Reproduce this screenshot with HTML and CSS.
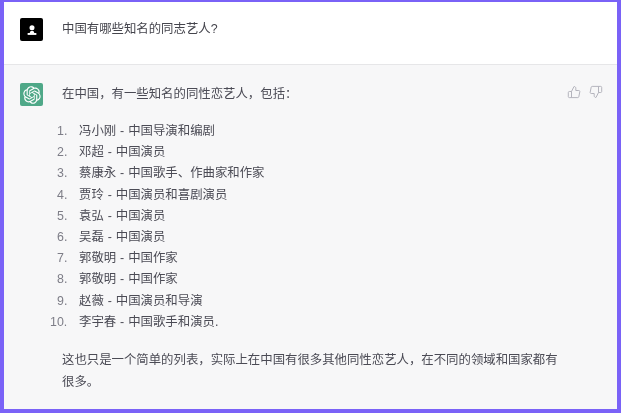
FILE: index.html
```html
<!DOCTYPE html>
<html lang="zh">
<head>
<meta charset="utf-8">
<title>Chat</title>
<link rel="stylesheet" href="styles.css">
</head>
<body>
<main class="frame">
  <section class="turn turn-user">
    <div class="avatar avatar-user">
      <svg viewBox="0 0 22 22" width="12" height="12"><circle cx="11" cy="7" r="4.600" fill="#fff"/><path d="M7 18v-2c0-2 1.800-3.500 4-3.500s4 1.500 4 3.500v2z" fill="#fff"/><rect x="3" y="16.500" width="16" height="3.500" fill="#fff"/></svg>
    </div>
    <p class="question">中国有哪些知名的同志艺人?</p>
  </section>
  <section class="turn turn-bot">
    <div class="avatar avatar-bot">
      <svg viewBox="0 0 41 41" width="18" height="18"><path fill="#fff" d="M37.5324 16.8707C37.9808 15.5241 38.1363 14.0974 37.9886 12.6859C37.8409 11.2744 37.3934 9.91076 36.676 8.68622C35.6126 6.83404 33.9882 5.3676 32.0373 4.4985C30.0864 3.62941 27.9098 3.40259 25.8215 3.85078C24.8796 2.7893 23.7219 1.94125 22.4257 1.36341C21.1295 0.785575 19.7249 0.491269 18.3058 0.500197C16.1708 0.495044 14.0893 1.16803 12.3614 2.42214C10.6335 3.67624 9.34853 5.44666 8.6917 7.47815C7.30085 7.76286 5.98686 8.3414 4.8377 9.17505C3.68854 10.0087 2.73073 11.0782 2.02839 12.312C0.956464 14.1591 0.498905 16.2988 0.721698 18.4228C0.944492 20.5467 1.83612 22.5449 3.268 24.1293C2.81966 25.4759 2.66413 26.9026 2.81182 28.3141C2.95951 29.7256 3.40701 31.0892 4.12437 32.3138C5.18791 34.1659 6.8123 35.6322 8.76321 36.5013C10.7141 37.3704 12.8907 37.5973 14.9789 37.1492C15.9208 38.2107 17.0786 39.0587 18.3747 39.6366C19.6709 40.2144 21.0755 40.5087 22.4946 40.4998C24.6307 40.5054 26.7133 39.8321 28.4418 38.5772C30.1704 37.3223 31.4556 35.5506 32.1119 33.5179C33.5027 33.2332 34.8167 32.6547 35.9659 31.821C37.115 30.9874 38.0728 29.9178 38.7752 28.684C39.8458 26.8371 40.3023 24.6979 40.0789 22.5748C39.8556 20.4517 38.9639 18.4544 37.5324 16.8707ZM22.4978 37.8849C20.7443 37.8874 19.0459 37.2733 17.6994 36.1501C17.7601 36.117 17.8666 36.0586 17.936 36.0161L25.9004 31.4156C26.1003 31.3019 26.2663 31.137 26.3813 30.9378C26.4964 30.7386 26.5563 30.5124 26.5549 30.2825V19.0542L29.9213 20.998C29.9389 21.0068 29.9541 21.0198 29.9656 21.0359C29.977 21.052 29.9842 21.0707 29.9867 21.0902V30.3889C29.9842 32.375 29.1946 34.2791 27.7909 35.6841C26.3872 37.0892 24.4838 37.8806 22.4978 37.8849ZM6.39227 31.0064C5.51397 29.4888 5.19742 27.7107 5.49804 25.9832C5.55718 26.0187 5.66048 26.0818 5.73461 26.1244L13.699 30.7248C13.8975 30.8408 14.1233 30.902 14.3532 30.902C14.583 30.902 14.8088 30.8408 15.0073 30.7248L24.731 25.1103V28.9979C24.7321 29.0177 24.7283 29.0376 24.7199 29.0556C24.7115 29.0736 24.6988 29.0893 24.6829 29.1012L16.6317 33.7497C14.9096 34.7416 12.8643 35.0097 10.9447 34.4954C9.02506 33.9811 7.38785 32.7263 6.39227 31.0064ZM4.29707 13.6194C5.17156 12.0998 6.55279 10.9364 8.19885 10.3327C8.19885 10.4013 8.19491 10.5228 8.19491 10.6071V19.808C8.19351 20.0378 8.25334 20.2638 8.36823 20.4629C8.48312 20.6619 8.64893 20.8267 8.84863 20.9404L18.5723 26.5542L15.206 28.4979C15.1894 28.5089 15.1703 28.5155 15.1505 28.5173C15.1307 28.5191 15.1107 28.516 15.0924 28.5082L7.04046 23.8557C5.32135 22.8601 4.06716 21.2235 3.55289 19.3046C3.03862 17.3858 3.30624 15.3413 4.29707 13.6194ZM31.955 20.0556L22.2312 14.4411L25.5976 12.4981C25.6142 12.4872 25.6333 12.4805 25.6531 12.4787C25.6729 12.4769 25.6928 12.4801 25.7111 12.4879L33.7631 17.1364C34.9967 17.849 36.0017 18.8982 36.6606 20.1613C37.3194 21.4244 37.6047 22.849 37.4832 24.2684C37.3617 25.6878 36.8382 27.0432 35.9743 28.1759C35.1103 29.3086 33.9415 30.1717 32.6047 30.6641C32.6047 30.5947 32.6047 30.4733 32.6047 30.3889V21.188C32.6066 20.9586 32.5474 20.7328 32.4332 20.5338C32.319 20.3348 32.154 20.1698 31.955 20.0556ZM35.3055 15.0128C35.2464 14.9765 35.1431 14.9142 35.069 14.8717L27.1045 10.2712C26.906 10.1554 26.6803 10.0943 26.4504 10.0943C26.2206 10.0943 25.9948 10.1554 25.7963 10.2712L16.0726 15.8858V11.9982C16.0715 11.9783 16.0753 11.9585 16.0837 11.9405C16.0921 11.9225 16.1048 11.9068 16.1207 11.8949L24.1719 7.25025C25.4053 6.53903 26.8158 6.19376 28.2383 6.25482C29.6608 6.31589 31.0364 6.78077 32.2044 7.59508C33.3723 8.40939 34.2842 9.53945 34.8334 10.8531C35.3826 12.1667 35.5464 13.6095 35.3055 15.0128ZM14.2424 21.9419L10.8752 19.9981C10.8576 19.9893 10.8423 19.9763 10.8309 19.9602C10.8195 19.9441 10.8122 19.9254 10.8098 19.9058V10.6071C10.8107 9.18295 11.2173 7.78848 11.9819 6.58696C12.7466 5.38544 13.8377 4.42659 15.1275 3.82264C16.4173 3.21869 17.8524 2.99464 19.2649 3.1767C20.6775 3.35876 22.0089 3.93941 23.1034 4.85067C23.0427 4.88379 22.937 4.94215 22.8668 4.98473L14.9024 9.58517C14.7025 9.69878 14.5366 9.86356 14.4215 10.0626C14.3065 10.2616 14.2466 10.4877 14.2479 10.7175L14.2424 21.9419ZM16.071 17.9991L20.4018 15.4978L24.7325 17.9975V22.9985L20.4018 25.4983L16.071 22.9985V17.9991Z"/></svg>
    </div>
    <div class="answer">
      <p class="intro">在中国，有一些知名的同性恋艺人，包括：</p>
      <ol class="list">
        <li>冯小刚 - 中国导演和编剧</li>
        <li>邓超 - 中国演员</li>
        <li>蔡康永 - 中国歌手、作曲家和作家</li>
        <li>贾玲 - 中国演员和喜剧演员</li>
        <li>袁弘 - 中国演员</li>
        <li>吴磊 - 中国演员</li>
        <li>郭敬明 - 中国作家</li>
        <li>郭敬明 - 中国作家</li>
        <li>赵薇 - 中国演员和导演</li>
        <li>李宇春 - 中国歌手和演员.</li>
      </ol>
      <p class="outro">这也只是一个简单的列表，实际上在中国有很多其他同性恋艺人，在不同的领域和国家都有很多。</p>
    </div>
    <div class="actions">
      <svg viewBox="0 0 14 14" width="14" height="14" fill="none" stroke="#b4b4bd" stroke-width="1" stroke-linejoin="round"><path d="M4.500 6.500 7 1.500c1 0 1.800.7 1.800 1.700V5.500h3c.7 0 1.200.6 1 1.300l-1 5c-.1.500-.5.800-1 .8H4.500z"/><path d="M4.500 6.500H2.300c-.6 0-1 .4-1 1v4.100c0 .6.400 1 1 1h2.200z"/></svg>
      <svg viewBox="0 0 14 14" width="14" height="14" fill="none" stroke="#b4b4bd" stroke-width="1" stroke-linejoin="round"><path d="M9.500 7.500 7 12.500c-1 0-1.800-.7-1.800-1.700V8.500h-3c-.7 0-1.200-.6-1-1.300l1-5c.1-.5.500-.8 1-.8h6.300z"/><path d="M9.500 7.500h2.200c.6 0 1-.4 1-1V2.400c0-.6-.4-1-1-1H9.500z"/></svg>
    </div>
  </section>
</main>
</body>
</html>
```

FILE: styles.css
```css
html, body {
  margin: 0;
  padding: 0;
  height: 100%;
}
body {
  background: #7a62f7;
  font-family: "Liberation Sans", "Noto Sans CJK SC", sans-serif;
  color: #4b4b55;
  font-size: 12.4px;
}
.frame {
  box-sizing: border-box;
  height: 413px;
  border-style: solid;
  border-color: #7a62f7;
  border-width: 2px 4px 4px 4px;
  display: flex;
  flex-direction: column;
  filter: blur(0.3px);
}
.turn {
  display: flex;
  padding-left: 16px;
}
.turn-user {
  background: #fff;
  height: 63px;
  border-bottom: 1px solid #e6e6e8;
  padding-top: 16px;
  box-sizing: border-box;
}
.turn-bot {
  background: #f7f7f8;
  flex: 1;
  padding-top: 18px;
  position: relative;
}
.avatar {
  width: 23px;
  height: 23px;
  border-radius: 2px;
  display: flex;
  align-items: center;
  justify-content: center;
  flex-shrink: 0;
}
.avatar-user { background: #000; }
.avatar-bot { background: #4fa888; }
.question {
  margin: 2px 0 0 19px;
  line-height: 18px;
  color: #45454d;
}
.answer {
  margin-left: 19px;
  width: 500px;
}
.intro {
  margin: 2px 0 0;
  line-height: 18px;
}
.list {
  counter-reset: item;
  list-style: none;
  margin: 18px 0 0;
  padding: 0;
  line-height: 21.2px;
  word-spacing: 0.5px;
}
.list li {
  counter-increment: item;
  display: flex;
}
.list li::before {
  content: counter(item) ".";
  width: 22px;
  margin-left: -5px;
  flex-shrink: 0;
  color: #7d7d87;
}
.list li:last-child::before {
  margin-left: -12px;
  width: 29px;
}
.outro {
  margin: 17px 0 0;
  line-height: 21.500px;
}
.actions {
  position: absolute;
  top: 20px;
  right: 14px;
  display: flex;
  gap: 8px;
}
```
